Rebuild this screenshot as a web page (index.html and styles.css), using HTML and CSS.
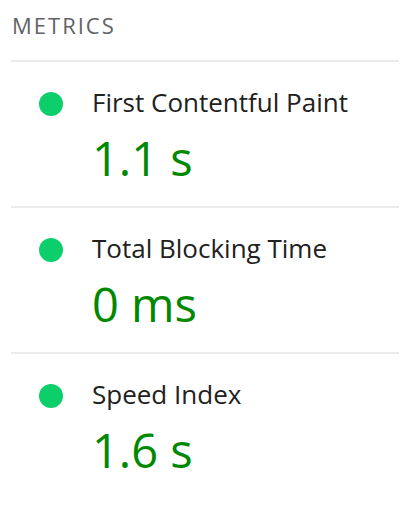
FILE: index.html
```html
<!DOCTYPE html>
<html>
<head>
<meta charset="utf-8">
<link rel="stylesheet" href="styles.css">
</head>
<body>
<div class="metrics">
  <div class="header">METRICS</div>
  <div class="metric">
    <div class="dot"></div>
    <div class="body">
      <div class="title">First Contentful Paint</div>
      <div class="value">1.1 s</div>
    </div>
  </div>
  <div class="metric">
    <div class="dot"></div>
    <div class="body">
      <div class="title">Total Blocking Time</div>
      <div class="value">0 ms</div>
    </div>
  </div>
  <div class="metric">
    <div class="dot"></div>
    <div class="body">
      <div class="title">Speed Index</div>
      <div class="value">1.6 s</div>
    </div>
  </div>
</div>
</body>
</html>
```
FILE: styles.css
```css
html, body {
  margin: 0;
  padding: 0;
  background: #fff;
}
body {
  font-family: "Open Sans", "Noto Sans", sans-serif;
}
.metrics {
  margin: 0 4px 0 11px;
}
.header {
  height: 60px;
  box-sizing: border-box;
  padding-top: 10px;
  padding-left: 1px;
  font-size: 22px;
  line-height: 30px;
  letter-spacing: 2px;
  color: #5f6368;
}
.metric {
  border-top: 2px solid #ebebeb;
  height: 144px;
  display: flex;
  align-items: flex-start;
  padding-left: 28px;
}
.dot {
  width: 24px;
  height: 24px;
  border-radius: 50%;
  background: #0cce6b;
  margin-top: 30px;
  flex: none;
}
.body {
  margin-left: 29px;
  padding-top: 22px;
}
.title {
  font-size: 26px;
  line-height: 36px;
  color: #212121;
}
.value {
  font-size: 47px;
  line-height: 60px;
  color: #080;
  margin-top: 8px;
}
```
